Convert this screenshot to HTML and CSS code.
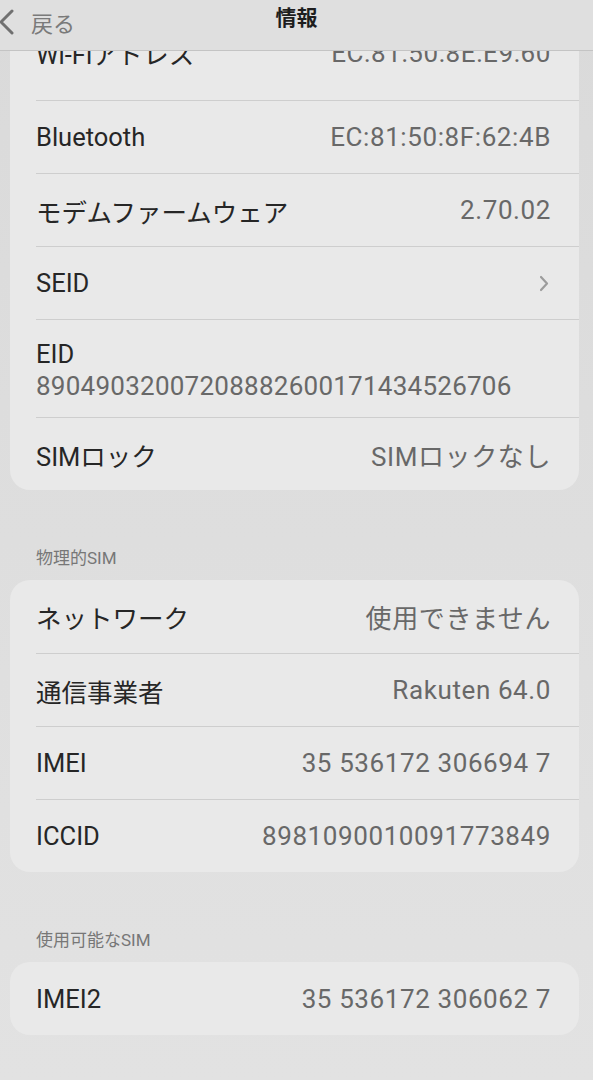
FILE: index.html
```html
<!DOCTYPE html>
<html lang="ja">
<head>
<meta charset="UTF-8">
<meta name="viewport" content="width=device-width, initial-scale=1.0">
<title>情報</title>
<link rel="stylesheet" href="styles.css">
</head>
<body>
    <header class="navbar">
        <div class="nav-back">
            <svg class="nav-chevron" width="15" height="26" viewBox="0 0 15 26">
                <path d="M13 2 L2 13 L13 24" fill="none" stroke="#707070" stroke-width="3" stroke-linecap="round" stroke-linejoin="round"/>
            </svg>
            <span>戻る</span>
        </div>
        <div class="nav-title">情報</div>
        <div></div>
    </header>

    <main class="content">
        <section class="card card-first">
            <div class="row row-cut">
                <span class="label">Wi-Fiアドレス</span>
                <span class="value">EC:81:50:8E:E9:60</span>
            </div>
            <div class="row">
                <span class="label">Bluetooth</span>
                <span class="value">EC:81:50:8F:62:4B</span>
            </div>
            <div class="row">
                <span class="label">モデムファームウェア</span>
                <span class="value">2.70.02</span>
            </div>
            <div class="row">
                <span class="label">SEID</span>
                <svg class="row-chevron" width="10" height="17" viewBox="0 0 10 17">
                    <path d="M2 2 L8 8.5 L2 15" fill="none" stroke="#9c9c9c" stroke-width="2.2" stroke-linecap="round" stroke-linejoin="round"/>
                </svg>
            </div>
            <div class="row row-stack">
                <span class="label">EID</span>
                <span class="value value-long">89049032007208882600171434526706</span>
            </div>
            <div class="row">
                <span class="label">SIMロック</span>
                <span class="value">SIMロックなし</span>
            </div>
        </section>

        <h2 class="section-title">物理的SIM</h2>
        <section class="card">
            <div class="row">
                <span class="label">ネットワーク</span>
                <span class="value">使用できません</span>
            </div>
            <div class="row">
                <span class="label">通信事業者</span>
                <span class="value">Rakuten 64.0</span>
            </div>
            <div class="row">
                <span class="label">IMEI</span>
                <span class="value">35 536172 306694 7</span>
            </div>
            <div class="row">
                <span class="label">ICCID</span>
                <span class="value">8981090010091773849</span>
            </div>
        </section>

        <h2 class="section-title">使用可能なSIM</h2>
        <section class="card">
            <div class="row">
                <span class="label">IMEI2</span>
                <span class="value">35 536172 306062 7</span>
            </div>
        </section>
    </main>
</body>
</html>
```

FILE: styles.css
```css
html {
    background: #dedede;
}
body {
    margin: 0;
    min-height: 100vh;
    background: linear-gradient(180deg, #dadada 0%, #dedede 50%, #e2e2e2 100%);
    font-family: Roboto, "Noto Sans CJK JP", sans-serif;
    color: #242424;
    overflow: hidden;
}

.navbar {
    position: relative;
    z-index: 1;
    height: 50px;
    display: grid;
    grid-template-columns: 1fr auto 1fr;
    align-items: start;
    background: #dfdfdf;
    border-bottom: 1px solid #c4c4c4;
}
.nav-back {
    display: flex;
    align-items: center;
    gap: 17px;
    padding-top: 6px;
    font-size: 22px;
    color: #7a7a7a;
}
.nav-chevron {
    margin-left: -1px;
}
.nav-title {
    padding-top: 1px;
    font-size: 21px;
    font-weight: 700;
    color: #1e1e1e;
}

.content {
    padding-bottom: 40px;
}

.card {
    margin: 0 14px 0 10px;
    background: #e9e9e9;
    border-radius: 20px;
    overflow: hidden;
}
.card-first {
    margin-top: -24px;
    border-radius: 0 0 20px 20px;
}

.row {
    box-sizing: border-box;
    height: 73px;
    margin-left: 26px;
    padding-right: 28px;
    display: flex;
    align-items: center;
    justify-content: space-between;
    border-top: 1px solid #cecece;
    font-size: 25.5px;
}
.row:first-child {
    border-top: none;
}
.row-cut {
    padding-bottom: 22px;
}
.row-stack {
    height: 98px;
    flex-direction: column;
    align-items: flex-start;
    justify-content: flex-start;
    padding-top: 18px;
}
.row-stack .label,
.row-stack .value {
    line-height: 32px;
}
.label {
    color: #262626;
}
.value {
    color: #686868;
    font-size: 26px;
    letter-spacing: 0.6px;
}
.value-long {
    letter-spacing: 0.25px;
}
.row-chevron {
    margin-right: 2px;
}

.section-title {
    margin: 0;
    padding: 57px 0 11px 36px;
    font-size: 17px;
    line-height: 22px;
    font-weight: 400;
    color: #777;
}
```
